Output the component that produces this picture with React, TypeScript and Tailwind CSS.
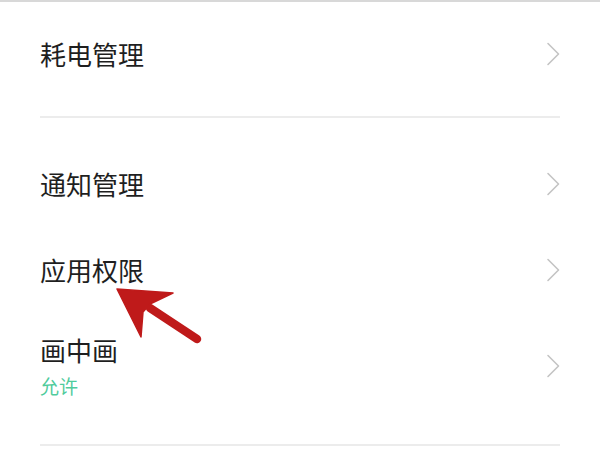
const font = { fontFamily: '"Noto Sans CJK SC", "Noto Sans", sans-serif' };

function Chevron() {
  return (
    <svg width="14" height="24" viewBox="0 0 14 24" className="shrink-0" aria-hidden>
      <path d="M2 1.5 L12.5 12 L2 22.5" fill="none" stroke="#c4c4c4" strokeWidth="1.6" strokeLinecap="round" strokeLinejoin="round" />
    </svg>
  );
}

function Row({ title, sub, h }: { title: string; sub?: string; h: string }) {
  return (
    <div className={`flex items-center justify-between px-[40px] ${h}`}>
      <div className="flex flex-col">
        <span className="text-[26px] leading-[28px] text-[#1f1f1f]">{title}</span>
        {sub && <span className="mt-[11px] text-[19px] leading-[22px] text-[#4fcb9c]">{sub}</span>}
      </div>
      <Chevron />
    </div>
  );
}

// red annotation arrow drawn over the list
function Arrow() {
  return (
    <svg className="pointer-events-none absolute left-0 top-0" width="600" height="458" viewBox="0 0 600 458">
      <path d="M150 308 L197 339" stroke="#bf1a1a" strokeWidth="8.5" strokeLinecap="round" />
      <path d="M117 289 L173 293 L150 304 L143 312 L141 337 Z" fill="#bf1a1a" strokeLinejoin="round" stroke="#bf1a1a" strokeWidth="1.5" />
    </svg>
  );
}

export default function App() {
  return (
    <div className="relative h-[458px] w-[600px] overflow-hidden bg-white" style={font}>
      <div className="h-[2px] bg-[#d8d8d8]" />
      <Row title="耗电管理" h="h-[104px]" />
      <div className="mx-[40px] mt-[10px] h-[2px] bg-[#ececec]" />
      <div className="mt-[23px]">
        <Row title="通知管理" h="h-[86px]" />
        <Row title="应用权限" h="h-[86px]" />
        <Row title="画中画" sub="允许" h="h-[106px]" />
      </div>
      <div className="mx-[40px] mt-[25px] h-[2px] bg-[#ececec]" />
      <Arrow />
    </div>
  );
}
